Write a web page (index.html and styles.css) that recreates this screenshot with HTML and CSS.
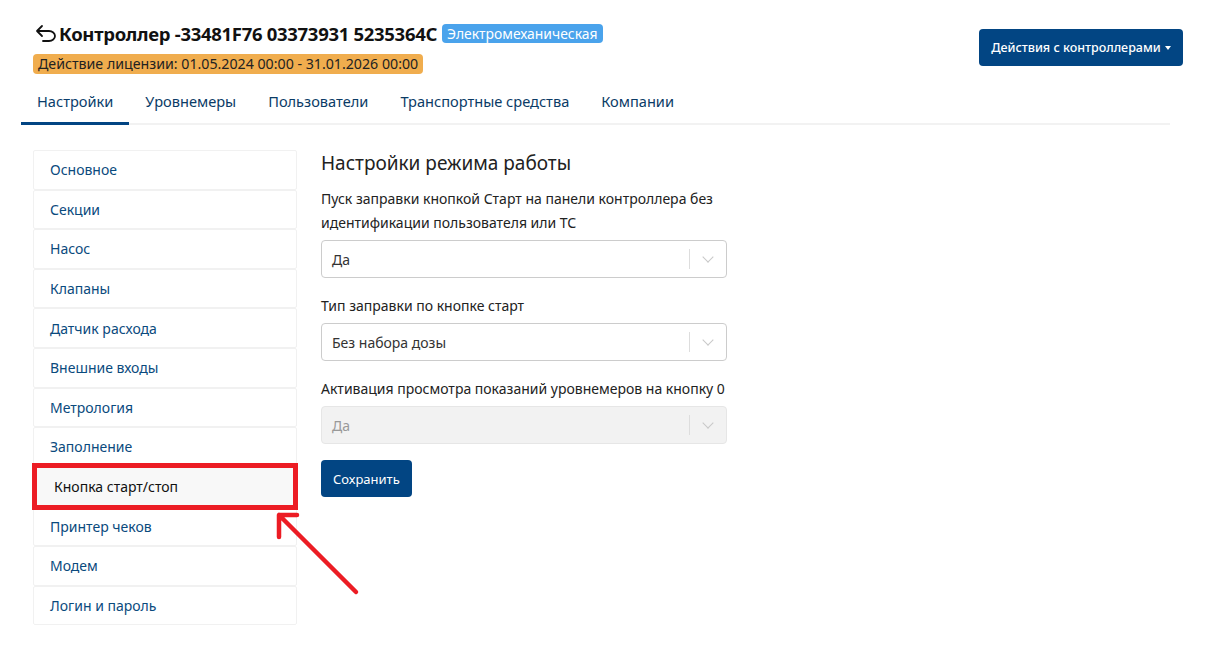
FILE: index.html
```html
<!DOCTYPE html>
<html>
<head>
  <title>Контроллер</title>
  <link rel="stylesheet" href="styles.css">
</head>
<body>
  <div class="page">
    <div class="header">
      <div class="header-info">
        <div class="title-row">
          <svg class="back-icon" width="22" height="18" viewBox="0 0 22 18">
            <path d="M7 2 L2 7 L7 12 M2 7 H14 a6 5 0 0 1 0 10 H8" fill="none" stroke="#111" stroke-width="1.8" stroke-linecap="round" stroke-linejoin="round"/>
          </svg>
          <h1 class="title">Контроллер -33481F76 03373931 5235364C</h1>
          <span class="badge badge-type">Электромеханическая</span>
        </div>
        <span class="badge badge-license">Действие лицензии: 01.05.2024 00:00 - 31.01.2026 00:00</span>
      </div>
      <button class="btn btn-primary btn-actions">Действия с контроллерами <span class="caret"></span></button>
    </div>

    <div class="tabs">
      <a class="tab active">Настройки</a>
      <a class="tab">Уровнемеры</a>
      <a class="tab">Пользователи</a>
      <a class="tab">Транспортные средства</a>
      <a class="tab">Компании</a>
    </div>

    <div class="content">
      <div class="side-menu">
        <a class="menu-item">Основное</a>
        <a class="menu-item">Секции</a>
        <a class="menu-item">Насос</a>
        <a class="menu-item">Клапаны</a>
        <a class="menu-item">Датчик расхода</a>
        <a class="menu-item">Внешние входы</a>
        <a class="menu-item">Метрология</a>
        <a class="menu-item">Заполнение</a>
        <a class="menu-item current">Кнопка старт/стоп</a>
        <a class="menu-item">Принтер чеков</a>
        <a class="menu-item">Модем</a>
        <a class="menu-item">Логин и пароль</a>
        <svg class="pointer-arrow" width="90" height="90" viewBox="0 0 90 90">
          <path d="M4 4 L81 81 M4 4 V26 M4 4 H22" fill="none" stroke="#ec1c24" stroke-width="4.5" stroke-linecap="round"/>
        </svg>
      </div>

      <div class="settings">
        <h2 class="settings-title">Настройки режима работы</h2>

        <div class="field">
          <label>Пуск заправки кнопкой Старт на панели контроллера без идентификации пользователя или ТС</label>
          <div class="select">
            <span class="select-value">Да</span>
            <span class="select-sep"></span>
            <span class="select-arrow"></span>
          </div>
        </div>

        <div class="field">
          <label>Тип заправки по кнопке старт</label>
          <div class="select">
            <span class="select-value">Без набора дозы</span>
            <span class="select-sep"></span>
            <span class="select-arrow"></span>
          </div>
        </div>

        <div class="field">
          <label>Активация просмотра показаний уровнемеров на кнопку 0</label>
          <div class="select disabled">
            <span class="select-value">Да</span>
            <span class="select-sep"></span>
            <span class="select-arrow"></span>
          </div>
        </div>

        <button class="btn btn-primary btn-save">Сохранить</button>
      </div>
    </div>
  </div>
</body>
</html>
```

FILE: styles.css
```css
body {
  margin: 0;
  padding: 0;
  background-color: #fff;
  font-family: "Noto Sans", "Open Sans", sans-serif;
  color: #212529;
}

.page {
  padding: 20px 30px 0 21px;
}

.header {
  display: flex;
  justify-content: space-between;
  align-items: flex-start;
}

.header-info {
  padding-left: 12px;
}

.title-row {
  display: flex;
  align-items: center;
  height: 26px;
}

.back-icon {
  margin-left: 2px;
  margin-right: 2px;
}

.title {
  margin: 0;
  font-size: 18.5px;
  font-weight: 700;
  color: #111;
  letter-spacing: -0.3px;
}

.badge {
  display: inline-block;
  border-radius: 4px;
  line-height: 19px;
  padding: 0 5px;
}

.badge-type {
  margin-left: 5px;
  font-size: 13.9px;
  background-color: #4aa3ec;
  color: #fff;
}

.badge-license {
  margin-top: 8px;
  font-size: 14.2px;
  line-height: 20px;
  background-color: #f0ad4e;
  color: #222;
}

.btn {
  border: none;
  border-radius: 4px;
  font-family: inherit;
  cursor: pointer;
}

.btn-primary {
  background-color: #024583;
  color: #fff;
}

.btn-actions {
  margin-top: 9px;
  height: 37px;
  padding: 0 12px;
  font-size: 12.5px;
  font-weight: 500;
}

.caret {
  display: inline-block;
  width: 0;
  height: 0;
  margin-left: 1px;
  vertical-align: 2px;
  border-left: 3.5px solid transparent;
  border-right: 3.5px solid transparent;
  border-top: 4px solid #fff;
}

.tabs {
  display: flex;
  margin: 10px 13px 0 0;
  border-bottom: 2px solid #f2f2f2;
}

.tab {
  padding: 7px 16px 11px;
  font-size: 14.6px;
  line-height: 20px;
  color: #0b3b66;
  border-bottom: 3px solid transparent;
  margin-bottom: -2px;
}

.tab.active {
  border-bottom-color: #024583;
  color: #0a3d6b;
}

.content {
  display: flex;
  padding: 25px 0 0 12px;
}

.side-menu {
  position: relative;
  width: 264px;
}

.menu-item {
  display: flex;
  align-items: center;
  box-sizing: border-box;
  height: 39.6px;
  padding-left: 16px;
  font-size: 14px;
  color: #0a4a7d;
  border: 1px solid #f1f1f1;
  border-radius: 2px;
}

.menu-item.current {
  position: relative;
  padding-left: 20px;
  background-color: #f8f8f8;
  color: #111;
}

.menu-item.current::after {
  content: "";
  position: absolute;
  left: -2px;
  right: -2px;
  top: -5px;
  bottom: -5px;
  border: 5px solid #ec1c24;
}

.pointer-arrow {
  position: absolute;
  left: 242px;
  top: 361px;
}

.settings {
  margin-left: 24px;
  width: 406px;
}

.settings-title {
  margin: 0 0 11px;
  font-size: 19px;
  font-weight: 400;
  line-height: 26px;
  color: #222;
}

.field {
  margin-bottom: 16px;
}

.field label {
  display: block;
  font-size: 14px;
  line-height: 24px;
  margin-bottom: 5px;
  color: #222;
}

.select {
  display: flex;
  align-items: center;
  box-sizing: border-box;
  height: 38px;
  border: 1px solid #ccc;
  border-radius: 4px;
  padding-left: 10px;
  font-size: 14px;
  color: #333;
}

.select-value {
  flex: 1;
}

.select-sep {
  width: 1px;
  height: 20px;
  background-color: #ddd;
}

.select-arrow {
  width: 7px;
  height: 7px;
  margin: -4px 14px 0 14px;
  border-right: 1.5px solid #c8c8c8;
  border-bottom: 1.5px solid #c8c8c8;
  transform: rotate(45deg);
}

.select.disabled {
  background-color: #f2f2f2;
  border-color: #e6e6e6;
  color: #999;
}

.btn-save {
  margin-top: 0;
  height: 37px;
  padding: 0 12px;
  font-size: 13px;
}
```
